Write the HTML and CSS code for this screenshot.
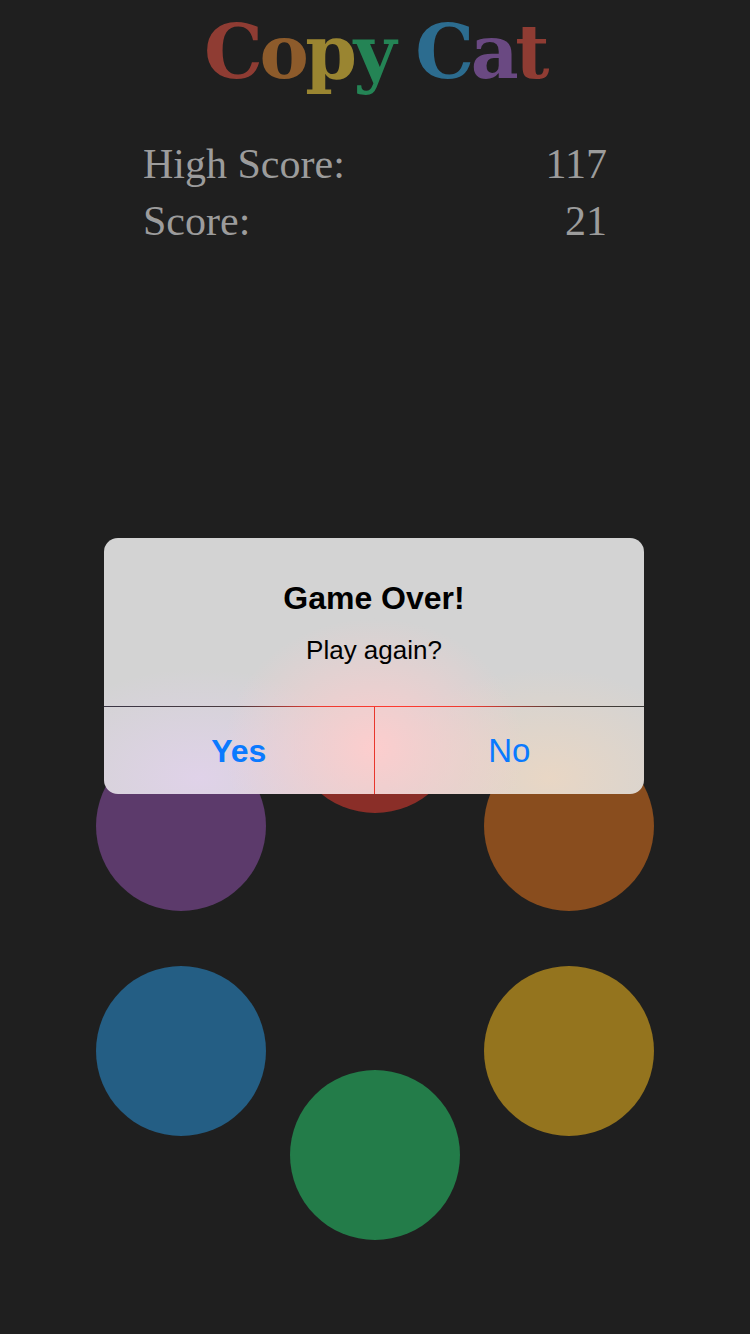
FILE: index.html
```html
<!DOCTYPE html>
<html>
<head>
<meta charset="utf-8">
<link rel="stylesheet" href="styles.css">
</head>
<body>
<div class="screen">
  <h1 class="title"><span class="c-red">C</span><span class="c-orange">o</span><span class="c-yellow">p</span><span class="c-green">y</span> <span class="c-blue">C</span><span class="c-purple">a</span><span class="c-red">t</span></h1>
  <div class="scores">
    <div class="score-row"><span>High Score:</span><span>117</span></div>
    <div class="score-row"><span>Score:</span><span>21</span></div>
  </div>
  <div class="board">
    <div class="col col-side">
      <div class="pad pad-purple"></div>
      <div class="pad pad-blue"></div>
    </div>
    <div class="col col-mid">
      <div class="pad pad-red"></div>
      <div class="pad pad-green"></div>
    </div>
    <div class="col col-side">
      <div class="pad pad-orange"></div>
      <div class="pad pad-yellow"></div>
    </div>
  </div>
  <div class="alert">
    <div class="alert-body">
      <div class="alert-title">Game Over!</div>
      <div class="alert-msg">Play again?</div>
    </div>
    <div class="alert-sep"></div>
    <div class="alert-buttons">
      <div class="btn btn-yes">Yes</div>
      <div class="btn-divider"></div>
      <div class="btn btn-no">No</div>
    </div>
  </div>
</div>
</body>
</html>
```

FILE: styles.css
```css
html, body {
  margin: 0;
  padding: 0;
  background: #1f1f1f;
}
.screen {
  position: relative;
  width: 750px;
  height: 1334px;
  background: #1f1f1f;
  overflow: hidden;
}
.title {
  margin: 0;
  padding-top: 8px;
  height: 88px;
  text-align: center;
  font-family: "DejaVu Serif", serif;
  font-weight: bold;
  font-size: 74px;
  line-height: 88px;
  letter-spacing: -3.5px;
}
.c-red { color: #8f3c33; }
.c-orange { color: #8d5b2b; }
.c-yellow { color: #9a8531; }
.c-green { color: #248455; }
.c-blue { color: #2c6c8f; }
.c-purple { color: #6a4982; }
.scores {
  margin: 40px 143px 0 143px;
  width: 464px;
  font-family: "Liberation Serif", serif;
  font-size: 42px;
  color: #9c9c9c;
}
.score-row {
  display: flex;
  justify-content: space-between;
  height: 57px;
  line-height: 57px;
}
.board {
  display: flex;
  gap: 24px;
  margin-top: 393px;
  margin-left: 96px;
}
.col {
  display: flex;
  flex-direction: column;
}
.col-side {
  padding-top: 98px;
  gap: 55px;
}
.col-mid {
  gap: 257px;
}
.pad {
  width: 170px;
  height: 170px;
  border-radius: 50%;
}
.pad-red { background: #8a2e28; }
.pad-purple { background: #5c3a6b; }
.pad-orange { background: #894d1e; }
.pad-blue { background: #245e84; }
.pad-yellow { background: #94741e; }
.pad-green { background: #237c49; }

.alert {
  position: absolute;
  left: 104px;
  top: 538px;
  width: 540px;
  height: 256px;
  border-radius: 14px;
  overflow: hidden;
  font-family: "Liberation Sans", Arial, sans-serif;
  background:
    radial-gradient(ellipse 150px 130px at 270px 210px, rgba(255,205,205,0.95), rgba(255,205,205,0) 100%),
    radial-gradient(ellipse 170px 110px at 95px 240px, rgba(225,210,235,0.9), rgba(225,210,235,0) 100%),
    radial-gradient(ellipse 160px 110px at 445px 240px, rgba(235,215,195,0.9), rgba(235,215,195,0) 100%),
    #d3d3d3;
  display: flex;
  flex-direction: column;
}
.alert-body {
  height: 168px;
  display: flex;
  flex-direction: column;
  align-items: center;
}
.alert-title {
  margin-top: 41px;
  font-size: 32px;
  font-weight: bold;
  color: #000;
  line-height: 38px;
}
.alert-msg {
  margin-top: 18px;
  font-size: 26px;
  color: #000;
  line-height: 30px;
}
.alert-sep {
  height: 1px;
  background: linear-gradient(to right, #3a3545 0%, #4a3b40 25%, #ee3a30 40%, #ff3a30 55%, #ee3a30 68%, #4b3f38 85%, #3b3a38 100%);
}
.alert-buttons {
  flex: 1;
  display: flex;
}
.btn {
  flex: 1;
  display: flex;
  align-items: center;
  justify-content: center;
  color: #0a7aff;
  font-size: 33px;
  padding-top: 1px;
}
.btn-yes {
  font-weight: bold;
  font-size: 32px;
}
.btn-divider {
  width: 1px;
  background: #e8362c;
}
```
